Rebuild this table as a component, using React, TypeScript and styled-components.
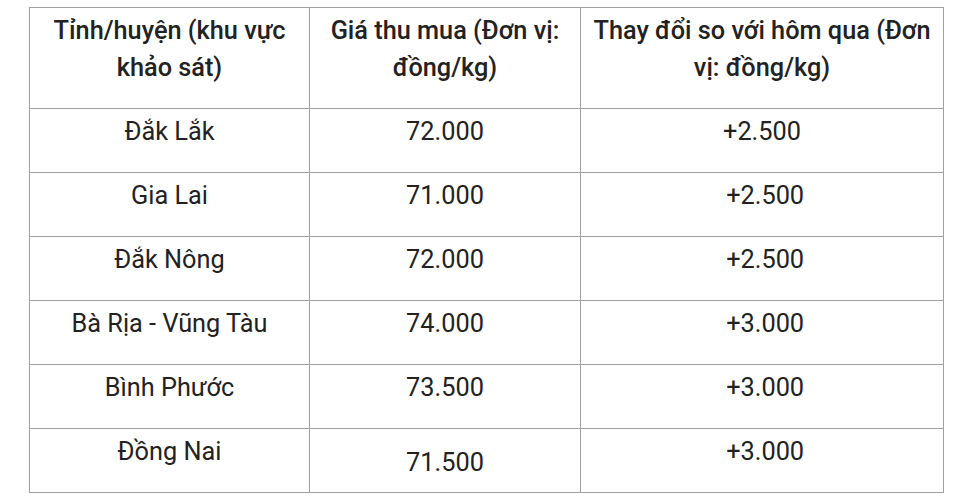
import React from "react";
import styled, { createGlobalStyle } from "styled-components";

const GlobalStyle = createGlobalStyle`
  html, body {
    margin: 0;
    padding: 0;
    background: #ffffff;
  }
  body {
    font-family: Roboto, "Liberation Sans", Arial, sans-serif;
    color: #222222;
  }
`;

const Page = styled.div`
  padding: 7px 0 0 29px;
`;

const Table = styled.table`
  border-collapse: collapse;
  table-layout: fixed;
  width: 914px;
  font-size: 25.3px;
  line-height: 37px;
`;

const HeadCell = styled.th`
  border: 1px solid #a0a0a0;
  font-weight: 500;
  text-align: center;
  vertical-align: top;
  padding: 4px 8px 20px;
  height: 76px;
`;

const Cell = styled.td<{ $middle?: boolean }>`
  border: 1px solid #a0a0a0;
  font-weight: 400;
  text-align: center;
  vertical-align: ${(p) => (p.$middle ? "middle" : "top")};
  padding: 4px 8px 0;
  height: 59px;
  white-space: pre;
`;

type Row = { area: string; price: string; change: string; middle?: boolean };

const rows: Row[] = [
  { area: "Đắk Lắk", price: "72.000", change: "+2.500" },
  { area: "Gia Lai", price: "71.000", change: "\u00a0+2.500" },
  { area: "Đắk Nông", price: "72.000", change: "\u00a0+2.500" },
  { area: "Bà Rịa - Vũng Tàu", price: "74.000", change: "\u00a0+3.000" },
  { area: "Bình Phước", price: "73.500", change: "\u00a0+3.000" },
  { area: "Đồng Nai", price: "71.500", change: "\u00a0+3.000", middle: true },
];

export default function App() {
  return (
    <>
      <GlobalStyle />
      <Page>
        <Table>
          <colgroup>
            <col style={{ width: 280 }} />
            <col style={{ width: 271 }} />
            <col style={{ width: 363 }} />
          </colgroup>
          <thead>
            <tr>
              <HeadCell>Tỉnh/huyện (khu vực khảo sát)</HeadCell>
              <HeadCell>Giá thu mua (Đơn vị: đồng/kg)</HeadCell>
              <HeadCell>Thay đổi so với hôm qua (Đơn vị: đồng/kg)</HeadCell>
            </tr>
          </thead>
          <tbody>
            {rows.map((r) => (
              <tr key={r.area}>
                <Cell>{r.area}</Cell>
                <Cell $middle={r.middle}>{r.price}</Cell>
                <Cell>{r.change}</Cell>
              </tr>
            ))}
          </tbody>
        </Table>
      </Page>
    </>
  );
}
